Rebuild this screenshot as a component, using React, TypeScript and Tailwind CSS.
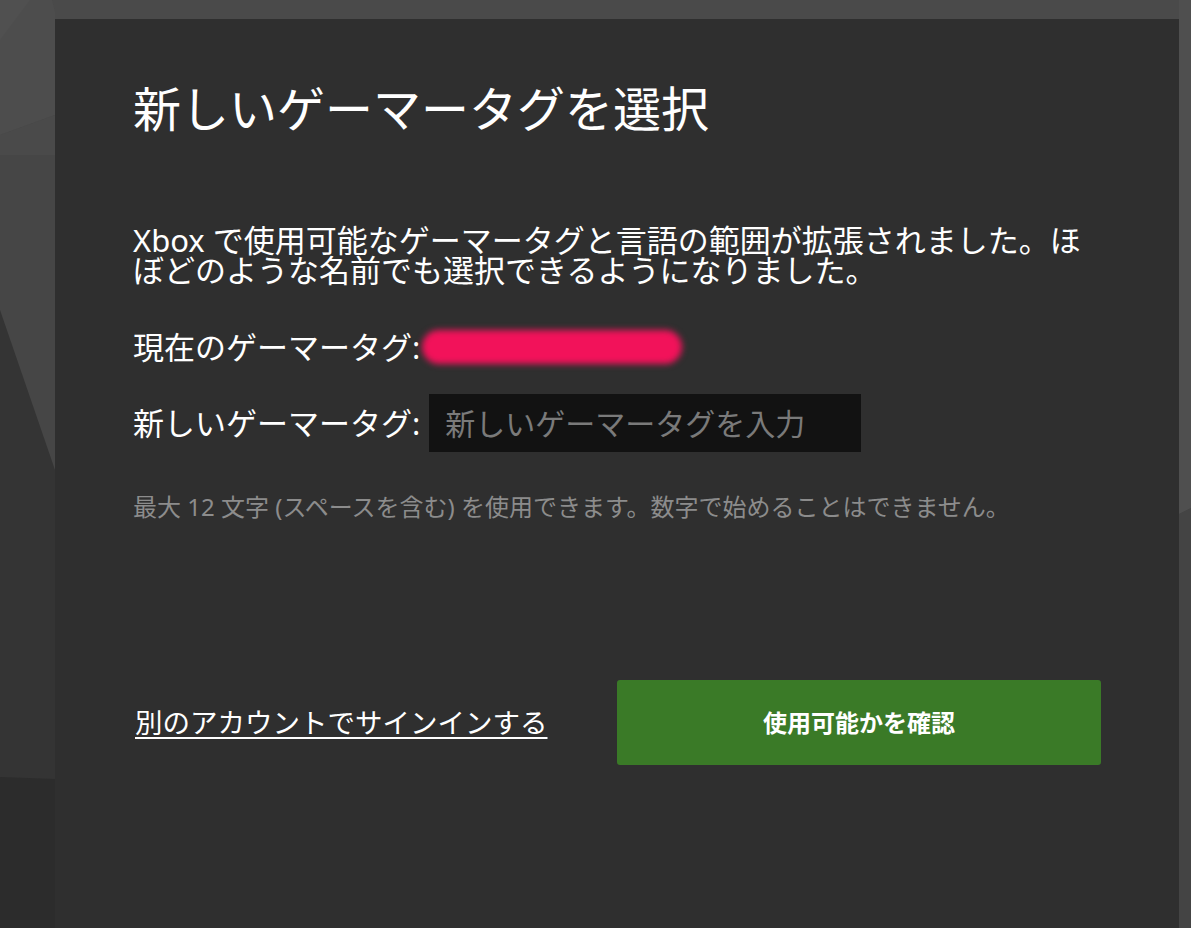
import React, { useState } from 'react';

// Background art behind the dialog (the Xbox shard wallpaper)
function Backdrop() {
  return (
    <svg
      className="absolute inset-0 h-full w-full"
      viewBox="0 0 1191 928"
      preserveAspectRatio="none"
      aria-hidden="true"
    >
      <rect x="0" y="0" width="1191" height="928" fill="#464646" />
      <rect x="0" y="0" width="1191" height="19" fill="#4a4a4a" />
      <polygon points="0,0 52,0 55,12 55,115 0,135" fill="#4d4d4d" />
      <polygon points="0,0 30,0 0,40" fill="#505050" />
      <polygon points="0,135 55,115 55,155 0,155" fill="#4a4a4a" />
      <polygon points="0,310 55,470 55,928 0,928" fill="#343434" />
      <polygon points="0,777 55,779 55,928 0,928" fill="#2c2c2c" />
      <polygon points="1179,0 1191,0 1191,508 1179,514" fill="#4f4f4f" />
      <polygon points="1179,514 1191,508 1191,928 1179,928" fill="#444444" />
    </svg>
  );
}

export default function App() {
  const [gamertag, setGamertag] = useState('');

  return (
    <div
      className="relative h-[928px] w-full overflow-hidden"
      style={{ fontFamily: '"Noto Sans", "Noto Sans CJK JP", sans-serif' }}
    >
      <Backdrop />

      <div className="relative ml-[55px] mt-[19px] h-[909px] w-[1124px] bg-[#2f2f2f] px-[78px] pt-[61px] text-white">
        <h1 className="text-[48px] leading-[58px] font-normal">新しいゲーマータグを選択</h1>

        <p className="mt-[87px] text-[31px] leading-[30px]">
          Xbox で使用可能なゲーマータグと言語の範囲が拡張されました。ほぼどのような名前でも選択できるようになりました。
        </p>

        {/* Current gamertag (hidden by the user) */}
        <div className="mt-[42px] flex h-[40px] items-center">
          <span className="text-[31px] leading-[40px]">現在のゲーマータグ:</span>
          <span className="ml-[2px] h-[34px] w-[260px] rounded-full bg-[#f2125a] blur-[3px]" />
        </div>

        {/* New gamertag */}
        <div className="mt-[27px] flex items-center">
          <label htmlFor="gamertag" className="text-[31px] leading-[40px]">
            新しいゲーマータグ:
          </label>
          <input
            id="gamertag"
            value={gamertag}
            onChange={(e) => setGamertag(e.target.value)}
            placeholder="新しいゲーマータグを入力"
            className="ml-[9px] h-[58px] w-[432px] bg-[#121212] px-[16px] text-[30px] text-white outline-none placeholder:text-[#7a7a7a]"
          />
        </div>

        <p className="mt-[40px] text-[24px] leading-[30px] text-[#8c8c8c]">
          最大 12 文字 (スペースを含む) を使用できます。数字で始めることはできません。
        </p>

        {/* Actions */}
        <div className="mt-[158px] flex items-center justify-between">
          <a href="#" className="ml-[2px] text-[27.5px] leading-[36px] underline underline-offset-[4px] decoration-[2px]">
            別のアカウントでサインインする
          </a>
          <button
            type="button"
            className="h-[85px] w-[484px] rounded-[3px] bg-[#3a7a27] text-[24px] font-bold text-white"
          >
            使用可能かを確認
          </button>
        </div>
      </div>
    </div>
  );
}
